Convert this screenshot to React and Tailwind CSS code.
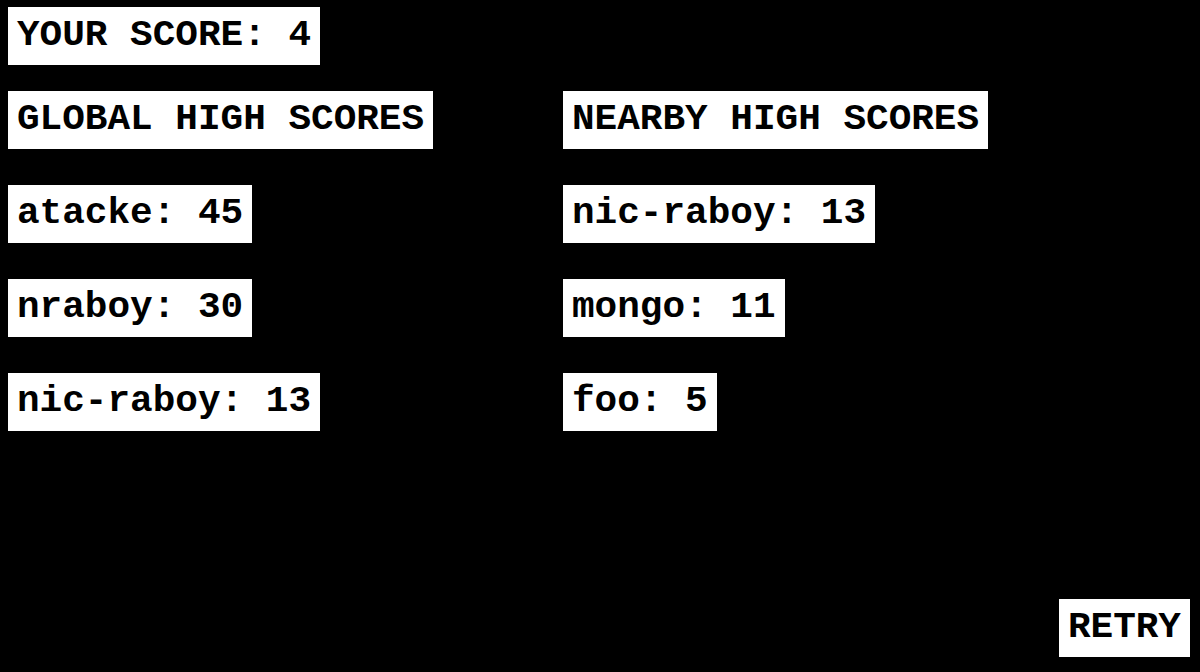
export default function App() {
  const font = { fontFamily: '"Liberation Mono", "Courier New", monospace' };
  const Box = ({ children }) => (
    <div className="self-start h-[58px] flex items-center px-[9px] bg-white text-black font-bold text-[37.7px] leading-none whitespace-pre">
      {children}
    </div>
  );
  const global = ["atacke: 45", "nraboy: 30", "nic-raboy: 13"];
  const nearby = ["nic-raboy: 13", "mongo: 11", "foo: 5"];
  return (
    <div className="w-[1200px] h-[672px] bg-black flex flex-col pl-[8px] pt-[7px] pr-[10px] pb-[15px]" style={font}>
      <Box>YOUR SCORE: 4</Box>
      <div className="flex mt-[26px]">
        <div className="w-[555px] flex flex-col gap-[36px]">
          <Box>GLOBAL HIGH SCORES</Box>
          {global.map((t) => (
            <Box key={t}>{t}</Box>
          ))}
        </div>
        <div className="flex flex-col gap-[36px]">
          <Box>NEARBY HIGH SCORES</Box>
          {nearby.map((t) => (
            <Box key={t}>{t}</Box>
          ))}
        </div>
      </div>
      <div className="flex-1" />
      <div className="self-end h-[58px] flex items-center px-[9px] bg-white text-black font-bold text-[37.7px] leading-none">
        RETRY
      </div>
    </div>
  );
}
